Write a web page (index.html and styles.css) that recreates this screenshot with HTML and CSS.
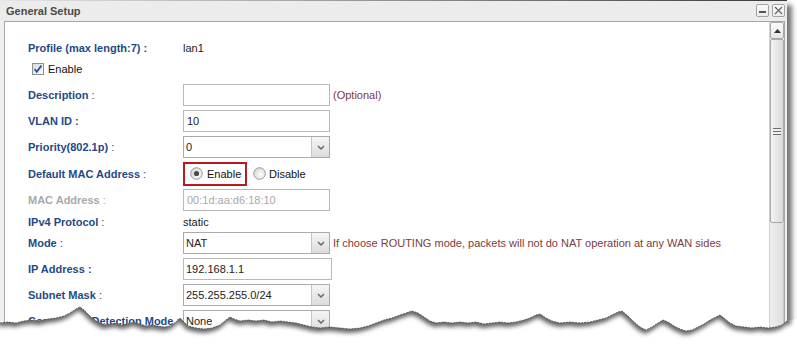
FILE: index.html
```html
<!DOCTYPE html>
<html>
<head>
<meta charset="utf-8">
<title>General Setup</title>
<link rel="stylesheet" href="styles.css">
</head>
<body>
<div class="window">
  <div class="titlebar">
    <span class="title">General Setup</span>
    <div class="tb-buttons">
      <span class="tb-btn"><svg width="11" height="11" viewBox="0 0 11 11"><rect x="2" y="6" width="7" height="2" fill="#555"/></svg></span>
      <span class="tb-btn"><svg width="11" height="11" viewBox="0 0 11 11"><path d="M2 2 L9 9 M9 2 L2 9" stroke="#666" stroke-width="1.2" fill="none"/></svg></span>
    </div>
  </div>
  <div class="client">
    <div class="form">
      <div class="row text-row">
        <div class="label"><b>Profile (max length:7) :</b></div>
        <div class="value">lan1</div>
      </div>
      <div class="row text-row r-enable">
        <div class="check">
          <svg class="cbox" width="12" height="12" viewBox="0 0 12 12">
            <defs><linearGradient id="cg" x1="0" y1="0" x2="1" y2="1"><stop offset="0" stop-color="#d6d6d6"/><stop offset="1" stop-color="#ffffff"/></linearGradient></defs>
            <rect x="0.5" y="0.5" width="11" height="11" fill="url(#cg)" stroke="#8e8f8f"/>
            <path d="M2.6 6.2 L4.8 8.8 L9.4 2.6" stroke="#2d4fa6" stroke-width="1.8" fill="none"/>
          </svg>
          <span>Enable</span>
        </div>
      </div>
      <div class="row r-desc">
        <div class="label"><b>Description</b> :</div>
        <div class="value"><span class="input w147"></span><span class="hint">(Optional)</span></div>
      </div>
      <div class="row">
        <div class="label"><b>VLAN ID :</b></div>
        <div class="value"><span class="input w147">10</span></div>
      </div>
      <div class="row">
        <div class="label"><b>Priority(802.1p)</b> :</div>
        <div class="value"><span class="select"><span class="sel-text">0</span><span class="sel-arrow"><svg width="8" height="5" viewBox="0 0 8 5"><path d="M1 1 L4 4 L7 1" stroke="#6a6a6a" stroke-width="1.5" fill="none"/></svg></span></span></div>
      </div>
      <div class="row r-mac">
        <div class="label"><b>Default MAC Address</b> :</div>
        <div class="value">
          <span class="mac-choice">
            <svg class="radio" width="13" height="13" viewBox="0 0 13 13">
              <defs><radialGradient id="rg" cx="0.6" cy="0.6" r="0.7"><stop offset="0" stop-color="#ffffff"/><stop offset="1" stop-color="#d2d2d2"/></radialGradient></defs>
              <circle cx="6.5" cy="6.5" r="5.8" fill="url(#rg)" stroke="#9a9a9a"/>
              <circle cx="6.5" cy="6.5" r="2.6" fill="#4a4a4a"/>
            </svg>
            <span>Enable</span>
          </span>
          <span class="radio-opt">
            <svg class="radio" width="13" height="13" viewBox="0 0 13 13">
              <circle cx="6.5" cy="6.5" r="5.8" fill="url(#rg)" stroke="#9a9a9a"/>
            </svg>
            <span>Disable</span>
          </span>
        </div>
      </div>
      <div class="row r-macaddr">
        <div class="label muted"><b>MAC Address</b> :</div>
        <div class="value"><span class="input w147 disabled">00:1d:aa:d6:18:10</span></div>
      </div>
      <div class="row text-row r-ipv4">
        <div class="label"><b>IPv4 Protocol</b> :</div>
        <div class="value">static</div>
      </div>
      <div class="row">
        <div class="label"><b>Mode</b> :</div>
        <div class="value"><span class="select"><span class="sel-text">NAT</span><span class="sel-arrow"><svg width="8" height="5" viewBox="0 0 8 5"><path d="M1 1 L4 4 L7 1" stroke="#6a6a6a" stroke-width="1.5" fill="none"/></svg></span></span><span class="hint">If choose ROUTING mode, packets will not do NAT operation at any WAN sides</span></div>
      </div>
      <div class="row">
        <div class="label"><b>IP Address :</b></div>
        <div class="value"><span class="input w149">192.168.1.1</span></div>
      </div>
      <div class="row">
        <div class="label"><b>Subnet Mask</b> :</div>
        <div class="value"><span class="select"><span class="sel-text">255.255.255.0/24</span><span class="sel-arrow"><svg width="8" height="5" viewBox="0 0 8 5"><path d="M1 1 L4 4 L7 1" stroke="#6a6a6a" stroke-width="1.5" fill="none"/></svg></span></span></div>
      </div>
      <div class="row">
        <div class="label"><b>Connection Detection Mode</b> :</div>
        <div class="value"><span class="select"><span class="sel-text">None</span><span class="sel-arrow"><svg width="8" height="5" viewBox="0 0 8 5"><path d="M1 1 L4 4 L7 1" stroke="#6a6a6a" stroke-width="1.5" fill="none"/></svg></span></span></div>
      </div>
    </div>
    <div class="scrollbar">
      <div class="sb-up"><svg width="7" height="4" viewBox="0 0 7 4"><path d="M0 4 L3.5 0 L7 4 Z" fill="#333"/></svg></div>
      <div class="sb-thumb"><span class="grip"></span></div>
      <div class="sb-track"></div>
    </div>
  </div>
</div>
<svg class="torn" width="797" height="344" viewBox="0 0 797 344">
  <defs>
    <filter id="blur" x="-5%" y="-50%" width="110%" height="200%"><feGaussianBlur stdDeviation="2.2"/></filter>
    <clipPath id="below"><path id="belowPath" d="M0,323 L8,322 L16,323 L24,321 L32,320 L40,321 L48,319 L56,318 L64,316 L70,313 L76,309 L80,307 L84,310 L88,314 L92,318 L98,322 L104,325 L110,324 L116,323 L122,325 L128,324 L134,322 L140,324 L146,326 L152,325 L158,326 L164,327 L170,326 L176,322 L180,318 L184,322 L188,326 L196,328 L204,329 L212,328 L220,325 L226,320 L230,317 L234,319 L240,321 L248,320 L256,321 L264,320 L272,322 L280,321 L288,322 L296,323 L304,325 L312,327 L320,328 L330,327 L340,328 L350,329 L360,328 L368,326 L376,323 L384,320 L392,318 L400,315 L406,313 L412,311 L418,313 L424,317 L430,321 L436,323 L444,322 L452,323 L460,322 L468,323 L476,322 L484,324 L492,323 L500,322 L508,323 L516,322 L524,320 L530,318 L536,315 L540,314 L546,318 L552,321 L560,323 L570,322 L580,323 L590,322 L598,320 L606,318 L612,315 L618,312 L622,311 L628,316 L634,322 L640,327 L646,330 L652,327 L658,323 L663,320 L668,322 L674,326 L680,329 L686,331 L692,330 L698,327 L704,324 L710,320 L716,317 L720,315 L724,318 L730,323 L736,326 L744,327 L752,328 L760,327 L768,328 L776,327 L782,325 L787,321 L797,319 L797,344 L0,344 Z"/></clipPath>
  </defs>
  <path d="M0,323 L8,322 L16,323 L24,321 L32,320 L40,321 L48,319 L56,318 L64,316 L70,313 L76,309 L80,307 L84,310 L88,314 L92,318 L98,322 L104,325 L110,324 L116,323 L122,325 L128,324 L134,322 L140,324 L146,326 L152,325 L158,326 L164,327 L170,326 L176,322 L180,318 L184,322 L188,326 L196,328 L204,329 L212,328 L220,325 L226,320 L230,317 L234,319 L240,321 L248,320 L256,321 L264,320 L272,322 L280,321 L288,322 L296,323 L304,325 L312,327 L320,328 L330,327 L340,328 L350,329 L360,328 L368,326 L376,323 L384,320 L392,318 L400,315 L406,313 L412,311 L418,313 L424,317 L430,321 L436,323 L444,322 L452,323 L460,322 L468,323 L476,322 L484,324 L492,323 L500,322 L508,323 L516,322 L524,320 L530,318 L536,315 L540,314 L546,318 L552,321 L560,323 L570,322 L580,323 L590,322 L598,320 L606,318 L612,315 L618,312 L622,311 L628,316 L634,322 L640,327 L646,330 L652,327 L658,323 L663,320 L668,322 L674,326 L680,329 L686,331 L692,330 L698,327 L704,324 L710,320 L716,317 L720,315 L724,318 L730,323 L736,326 L744,327 L752,328 L760,327 L768,328 L776,327 L782,325 L787,321 L797,319 L797,344 L0,344 Z" fill="#ffffff"/>
  <g clip-path="url(#below)">
    <path transform="translate(-1,4)" filter="url(#blur)" fill="#4a4a4a" fill-opacity="0.85" d="M0,280 L0,323 L8,322 L16,323 L24,321 L32,320 L40,321 L48,319 L56,318 L64,316 L70,313 L76,309 L80,307 L84,310 L88,314 L92,318 L98,322 L104,325 L110,324 L116,323 L122,325 L128,324 L134,322 L140,324 L146,326 L152,325 L158,326 L164,327 L170,326 L176,322 L180,318 L184,322 L188,326 L196,328 L204,329 L212,328 L220,325 L226,320 L230,317 L234,319 L240,321 L248,320 L256,321 L264,320 L272,322 L280,321 L288,322 L296,323 L304,325 L312,327 L320,328 L330,327 L340,328 L350,329 L360,328 L368,326 L376,323 L384,320 L392,318 L400,315 L406,313 L412,311 L418,313 L424,317 L430,321 L436,323 L444,322 L452,323 L460,322 L468,323 L476,322 L484,324 L492,323 L500,322 L508,323 L516,322 L524,320 L530,318 L536,315 L540,314 L546,318 L552,321 L560,323 L570,322 L580,323 L590,322 L598,320 L606,318 L612,315 L618,312 L622,311 L628,316 L634,322 L640,327 L646,330 L652,327 L658,323 L663,320 L668,322 L674,326 L680,329 L686,331 L692,330 L698,327 L704,324 L710,320 L716,317 L720,315 L724,318 L730,323 L736,326 L744,327 L752,328 L760,327 L768,328 L776,327 L782,325 L787,321 L792,320 L792,280 Z"/>
  </g>
  <path fill="none" stroke="#3a3a3a" stroke-width="0.7" stroke-dasharray="2 1" d="M0,323 L8,322 L16,323 L24,321 L32,320 L40,321 L48,319 L56,318 L64,316 L70,313 L76,309 L80,307 L84,310 L88,314 L92,318 L98,322 L104,325 L110,324 L116,323 L122,325 L128,324 L134,322 L140,324 L146,326 L152,325 L158,326 L164,327 L170,326 L176,322 L180,318 L184,322 L188,326 L196,328 L204,329 L212,328 L220,325 L226,320 L230,317 L234,319 L240,321 L248,320 L256,321 L264,320 L272,322 L280,321 L288,322 L296,323 L304,325 L312,327 L320,328 L330,327 L340,328 L350,329 L360,328 L368,326 L376,323 L384,320 L392,318 L400,315 L406,313 L412,311 L418,313 L424,317 L430,321 L436,323 L444,322 L452,323 L460,322 L468,323 L476,322 L484,324 L492,323 L500,322 L508,323 L516,322 L524,320 L530,318 L536,315 L540,314 L546,318 L552,321 L560,323 L570,322 L580,323 L590,322 L598,320 L606,318 L612,315 L618,312 L622,311 L628,316 L634,322 L640,327 L646,330 L652,327 L658,323 L663,320 L668,322 L674,326 L680,329 L686,331 L692,330 L698,327 L704,324 L710,320 L716,317 L720,315 L724,318 L730,323 L736,326 L744,327 L752,328 L760,327 L768,328 L776,327 L782,325 L787,321"/>
</svg>
</body>
</html>
```

FILE: styles.css
```css
html, body {
  margin: 0;
  padding: 0;
}

body {
  width: 797px;
  height: 344px;
  overflow: hidden;
  position: relative;
  background: #ffffff;
  font-family: "Liberation Sans", Arial, sans-serif;
  font-size: 11px;
  color: #222222;
}

.window {
  width: 787px;
  height: 344px;
  background: #f0f0f0;
  box-shadow: 5px 5px 5px rgba(0, 0, 0, 0.55);
  display: flex;
  flex-direction: column;
}

.titlebar {
  height: 21px;
  flex: 0 0 21px;
  display: flex;
  align-items: center;
  justify-content: space-between;
  padding: 0 2px 0 6px;
  background-color: #ececec;
  background-image: linear-gradient(to right, #e6e6e6, #3a3a3a);
  background-size: 100% 1px;
  background-repeat: no-repeat;
}

.title {
  font-weight: bold;
  font-size: 11px;
  color: #4a4a4a;
  line-height: 14px;
}

.tb-buttons {
  display: flex;
  gap: 3px;
}

.tb-btn {
  width: 13px;
  height: 13px;
  box-sizing: border-box;
  border: 1px solid #a2a2a2;
  border-radius: 2px;
  background: linear-gradient(#fbfbfb, #ececec);
  display: flex;
  align-items: center;
  justify-content: center;
}

.client {
  flex: 1;
  margin: 0 2px 0 4px;
  border: 1px solid #a6a6a6;
  border-bottom: none;
  background: #ffffff;
  display: flex;
  min-height: 0;
}

.form {
  flex: 1;
  padding: 17px 0 0 23px;
}

.row {
  display: grid;
  grid-template-columns: 155px auto;
  align-items: center;
  height: 26px;
}

.text-row {
  height: 18px;
}

.r-enable {
  margin-top: 3px;
  display: flex;
}

.r-desc {
  margin-top: 4px;
}

.r-mac {
  height: 27px;
}

.r-ipv4 {
  height: 17px;
}

.label {
  color: #1e4a87;
  white-space: nowrap;
  line-height: 14px;
}

.label.muted {
  color: #a9a9a9;
}

.value {
  display: flex;
  align-items: center;
  white-space: nowrap;
  line-height: 14px;
  color: #222222;
}

.check {
  display: flex;
  align-items: center;
  margin-left: 4px;
  color: #111111;
}

.cbox {
  display: block;
  margin-right: 4px;
}

.input {
  box-sizing: border-box;
  height: 22px;
  border: 1px solid #b9b9b9;
  background: #ffffff;
  padding: 0 3px;
  display: flex;
  align-items: center;
  color: #222222;
}

.w147 {
  width: 147px;
}

.w149 {
  width: 149px;
  padding-left: 2px;
}

.input.disabled {
  color: #a8a8a8;
}

.hint {
  color: #7d3b3b;
  margin-left: 3px;
}

.select {
  box-sizing: border-box;
  width: 147px;
  height: 22px;
  border: 1px solid #ababab;
  background: #ffffff;
  display: flex;
  align-items: stretch;
}

.sel-text {
  flex: 1;
  display: flex;
  align-items: center;
  padding-left: 2px;
  color: #222222;
}

.sel-arrow {
  width: 17px;
  border-left: 1px solid #c4c4c4;
  background: linear-gradient(#f5f5f5, #dcdcdc);
  display: flex;
  align-items: center;
  justify-content: center;
}

.sel-arrow svg {
  display: block;
}

.mac-choice {
  box-sizing: border-box;
  width: 64px;
  height: 24px;
  border: 2px solid #b31d1d;
  padding-left: 5px;
  display: flex;
  align-items: center;
  color: #111111;
}

.radio {
  display: block;
  margin-right: 4px;
  flex: 0 0 13px;
}

.radio-opt {
  display: flex;
  align-items: center;
  margin-left: 6px;
  color: #111111;
}

.radio-opt .radio {
  margin-right: 3px;
}

.scrollbar {
  width: 15px;
  flex: 0 0 15px;
  display: flex;
  flex-direction: column;
  background: #f2f2f2;
  border-left: 1px solid #d0d0d0;
  box-sizing: border-box;
}

.sb-up {
  box-sizing: border-box;
  height: 17px;
  border: 1px solid #a9a9a9;
  border-radius: 2px;
  background: linear-gradient(#fdfdfd, #e6e6e6);
  display: flex;
  align-items: center;
  justify-content: center;
}

.sb-up svg {
  display: block;
}

.sb-thumb {
  box-sizing: border-box;
  height: 184px;
  border: 1px solid #a9a9a9;
  border-radius: 2px;
  background: linear-gradient(to right, #f4f4f4, #d9d9d9);
  display: flex;
  align-items: center;
  justify-content: center;
}

.grip {
  width: 8px;
  height: 7px;
  background: repeating-linear-gradient(#6e6e6e 0, #6e6e6e 1px, #f0f0f0 1px, #f0f0f0 3px);
}

.sb-track {
  flex: 1;
  background: linear-gradient(to right, #efefef, #dedede);
  border-right: 1px solid #c8c8c8;
}

.torn {
  position: absolute;
  left: 0;
  top: 0;
  pointer-events: none;
}
```
